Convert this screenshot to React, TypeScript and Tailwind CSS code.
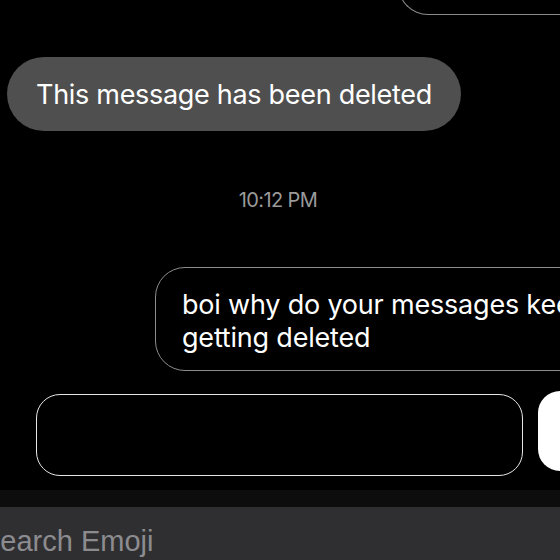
import React from 'react';

const App = () => (
  <div className="h-[560px] w-[560px] overflow-hidden bg-black flex flex-col font-['Inter',sans-serif] text-white">
    {/* previous outgoing bubble, clipped by the top edge */}
    <div className="-mt-[50px] ml-[398px] h-[65px] w-[220px] shrink-0 rounded-bl-[30px] border-b border-l border-[#8a8a8a]" />

    {/* deleted message */}
    <div className="mt-[42px] ml-[7px] flex h-[74px] w-[454px] shrink-0 items-center rounded-full bg-[#4f4f4f] pl-[29px]">
      <span className="text-[27px] leading-none tracking-[-0.3px]">This message has been deleted</span>
    </div>

    {/* timestamp */}
    <div className="mt-[57px] pr-[4px] text-center text-[20px] leading-[24px] tracking-[-0.6px] text-[#9a9a9a]">10:12 PM</div>

    {/* outgoing message */}
    <div className="mt-[55px] ml-[155px] w-[460px] shrink-0 rounded-[30px] border border-[#8c8c8c] pt-[20px] pb-[16px] pl-[26px]">
      <p className="whitespace-nowrap text-[27px] leading-[33px] tracking-[-0.2px]">
        boi why do your messages keep
        <br />
        getting deleted
      </p>
    </div>

    {/* composer */}
    <div className="mt-[23px] flex shrink-0 items-start">
      <div className="ml-[36px] h-[82px] w-[487px] shrink-0 rounded-[24px] border-[1.5px] border-[#e6e6e6]" />
      <div className="-mt-[3px] ml-[15px] h-[80px] w-[60px] shrink-0 rounded-[22px] bg-white" />
    </div>

    {/* keyboard top */}
    <div className="mt-[14px] h-[17px] shrink-0 bg-[#0d0d0d]" />
    <div className="flex-1 bg-[#2f2f31] pt-[18px]">
      <span className="-ml-[19px] block whitespace-nowrap font-['Liberation_Sans',sans-serif] text-[29px] leading-[32px] text-[#8c8c90]">
        Search Emoji
      </span>
    </div>
  </div>
);

export default App;
